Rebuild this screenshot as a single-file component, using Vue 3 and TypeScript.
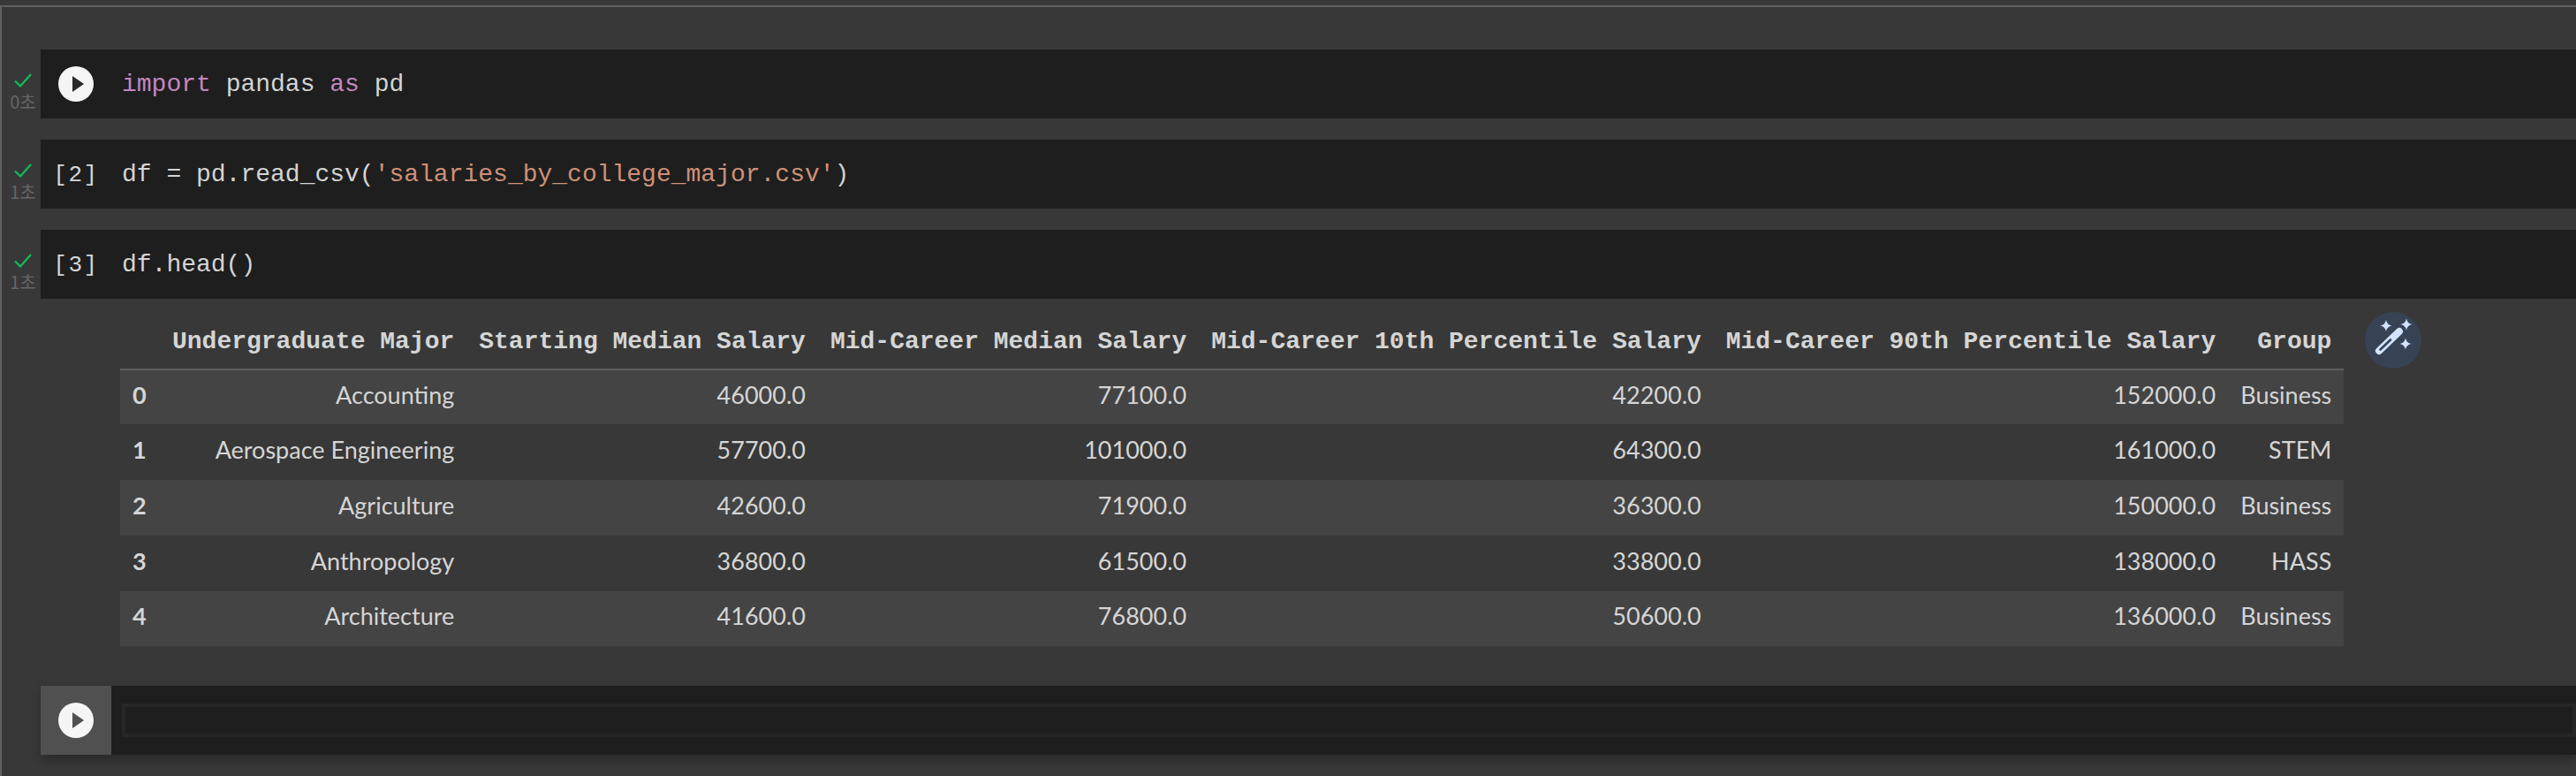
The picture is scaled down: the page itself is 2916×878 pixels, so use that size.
<script setup lang="ts">
interface Row { idx: number; major: string; start: string; mid: string; p10: string; p90: string; group: string }
const rows: Row[] = [
  { idx: 0, major: 'Accounting', start: '46000.0', mid: '77100.0', p10: '42200.0', p90: '152000.0', group: 'Business' },
  { idx: 1, major: 'Aerospace Engineering', start: '57700.0', mid: '101000.0', p10: '64300.0', p90: '161000.0', group: 'STEM' },
  { idx: 2, major: 'Agriculture', start: '42600.0', mid: '71900.0', p10: '36300.0', p90: '150000.0', group: 'Business' },
  { idx: 3, major: 'Anthropology', start: '36800.0', mid: '61500.0', p10: '33800.0', p90: '138000.0', group: 'HASS' },
  { idx: 4, major: 'Architecture', start: '41600.0', mid: '76800.0', p10: '50600.0', p90: '136000.0', group: 'Business' },
]
const headers = ['Undergraduate Major', 'Starting Median Salary', 'Mid-Career Median Salary', 'Mid-Career 10th Percentile Salary', 'Mid-Career 90th Percentile Salary', 'Group']
</script>

<template>
  <div class="page">
    <div class="topline"></div>
    <div class="notebook">
      <div class="cell-row">
        <div class="status"><svg class="check" viewBox="0 0 20 18"><path d="M1 9.5 L7 15.5 L19 2" fill="none" stroke="#0fbf5b" stroke-width="2.2" /></svg><span class="time">0초</span></div>
        <div class="cell">
          <div class="gutter"><span class="run"><svg viewBox="0 0 40 40"><path d="M16 11 L29 20 L16 29 Z" fill="#2a2a2a" /></svg></span></div>
          <div class="code"><span class="kw">import</span> pandas <span class="kw">as</span> pd</div>
        </div>
      </div>
      <div class="cell-row">
        <div class="status"><svg class="check" viewBox="0 0 20 18"><path d="M1 9.5 L7 15.5 L19 2" fill="none" stroke="#0fbf5b" stroke-width="2.2" /></svg><span class="time">1초</span></div>
        <div class="cell">
          <div class="gutter"><span class="count">[2]</span></div>
          <div class="code">df = pd.read_csv(<span class="str">'salaries_by_college_major.csv'</span>)</div>
        </div>
      </div>
      <div class="cell-row">
        <div class="status"><svg class="check" viewBox="0 0 20 18"><path d="M1 9.5 L7 15.5 L19 2" fill="none" stroke="#0fbf5b" stroke-width="2.2" /></svg><span class="time">1초</span></div>
        <div class="cell">
          <div class="gutter"><span class="count">[3]</span></div>
          <div class="code">df.head()</div>
        </div>
      </div>
      <div class="output">
        <table class="frame">
          <thead>
            <tr>
              <th class="corner"></th>
              <th v-for="h in headers" :key="h">{{ h }}</th>
            </tr>
          </thead>
          <tbody>
            <tr v-for="r in rows" :key="r.idx">
              <th class="idx">{{ r.idx }}</th>
              <td>{{ r.major }}</td>
              <td>{{ r.start }}</td>
              <td>{{ r.mid }}</td>
              <td>{{ r.p10 }}</td>
              <td>{{ r.p90 }}</td>
              <td>{{ r.group }}</td>
            </tr>
          </tbody>
        </table>
        <span class="magic">
          <svg viewBox="0 0 64 64">
            <path d="M16 44 L39 22" fill="none" stroke="#d3e3fd" stroke-width="8" stroke-linecap="round" />
            <path d="M17.5 42.5 L29 31.5" fill="none" stroke="#374355" stroke-width="2.6" stroke-linecap="round" />
            <path d="M24 9 Q25 14.5 30.5 15.5 Q25 16.5 24 22 Q23 16.5 17.5 15.5 Q23 14.5 24 9 Z" fill="#d3e3fd" />
            <path d="M47 7.5 Q48 13 53.5 14 Q48 15 47 20.5 Q46 15 40.5 14 Q46 13 47 7.5 Z" fill="#d3e3fd" />
            <path d="M46 29.5 Q47 35 52.5 36 Q47 37 46 42.5 Q45 37 39.5 36 Q45 35 46 29.5 Z" fill="#d3e3fd" />
          </svg>
        </span>
      </div>
      <div class="cell-row">
        <div class="status"></div>
        <div class="cell active">
          <div class="gutter hovered"><span class="run"><svg viewBox="0 0 40 40"><path d="M16 11 L29 20 L16 29 Z" fill="#505050" /></svg></span></div>
          <div class="editor"></div>
        </div>
      </div>
    </div>
  </div>
</template>

<style>
html, body { margin: 0; padding: 0; background: #383838; }
</style>

<style scoped>
.page {
  width: 2916px;
  height: 878px;
  overflow: hidden;
  background: #383838;
  box-sizing: border-box;
  padding-top: 6px;
  color: #d5d5d5;
}
.topline { height: 2px; background: #606060; }
.notebook {
  height: 870px;
  box-sizing: border-box;
  border-left: 2px solid #606060;
  padding-top: 48px;
  display: flex;
  flex-direction: column;
  gap: 24px;
}
.cell-row { display: flex; height: 78px; flex: none; }
.status {
  width: 44px;
  flex: none;
  display: flex;
  flex-direction: column;
  align-items: center;
  padding-top: 26px;
  box-sizing: border-box;
  padding-left: 4px;
}
.check { width: 20px; height: 18px; display: block; }
.time {
  font-family: "Noto Sans CJK KR", "Noto Sans", sans-serif;
  font-size: 20px;
  line-height: 22px;
  color: #666;
  margin-top: 4px;
}
.cell {
  flex: 1;
  display: flex;
  background: #1e1e1e;
  align-items: center;
  height: 78px;
}
.cell.active { box-shadow: 0 6px 10px rgba(0, 0, 0, 0.25); }
.gutter {
  width: 80px;
  height: 100%;
  flex: none;
  display: flex;
  align-items: center;
  justify-content: center;
}
.gutter.hovered { background: #505050; }
.run {
  width: 40px;
  height: 40px;
  border-radius: 50%;
  background: #f5f5f5;
  display: block;
}
.run svg { width: 40px; height: 40px; display: block; }
.count {
  font-family: "Liberation Mono", monospace;
  font-size: 26px;
  letter-spacing: 1.5px;
  color: #d5d5d5;
  padding-top: 2px;
}
.code {
  margin-left: 12px;
  padding-top: 2px;
  font-family: "Liberation Mono", monospace;
  font-size: 28px;
  line-height: 40px;
  color: #d4d4d4;
  white-space: pre;
}
.kw { color: #c586c0; }
.str { color: #ce9178; }
.editor {
  flex: 1;
  height: 38px;
  margin-left: 12px;
  border: 4px solid #262626;
  box-sizing: border-box;
}
.output {
  height: 414px;
  flex: none;
  margin-top: -24px;
  padding-left: 134px;
  padding-top: 16px;
  box-sizing: border-box;
  display: flex;
  align-items: flex-start;
  gap: 24px;
}
.frame {
  border-collapse: collapse;
  border: none;
  flex: none;
}
.frame thead th {
  height: 61px;
  padding: 2px 14px 0;
  font-family: "Liberation Mono", monospace;
  font-size: 28px;
  font-weight: 700;
  text-align: right;
  color: #d5d5d5;
  border-bottom: 2px solid #606060;
  white-space: nowrap;
}
.frame thead th.corner { width: 17px; }
.frame td, .frame .idx {
  height: 63px;
  padding: 0 14px 7px;
  box-sizing: border-box;
  font-family: Lato, sans-serif;
  font-size: 27px;
  text-align: right;
  white-space: nowrap;
  color: #d5d5d5;
  font-weight: 400;
}
.frame tbody tr:first-child > *, .frame tbody tr:last-child > * { height: 62px; }
.frame .idx { font-weight: 700; text-align: left; }
.frame tbody tr:nth-child(odd) { background: #444; }
.magic {
  width: 64px;
  height: 64px;
  border-radius: 50%;
  background: #374355;
  flex: none;
  margin-top: -1px;
}
.magic svg { width: 64px; height: 64px; display: block; }
</style>
